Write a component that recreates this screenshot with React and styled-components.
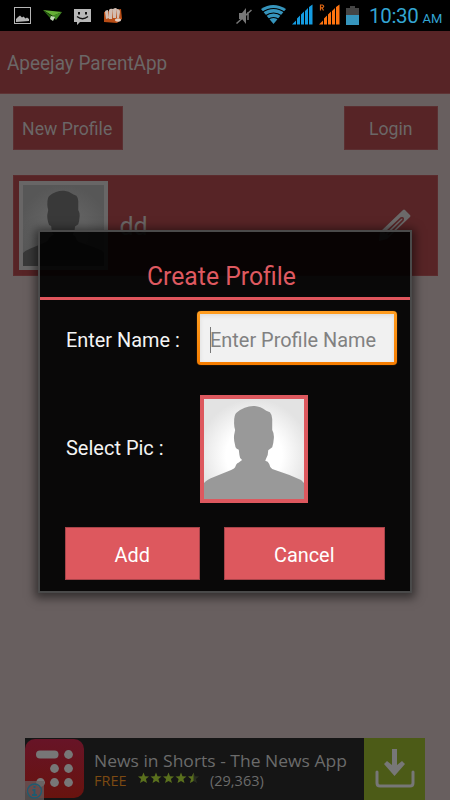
import React from "react";
import styled, { createGlobalStyle } from "styled-components";

const GlobalStyle = createGlobalStyle`
  * {
    box-sizing: border-box;
  }
  body {
    margin: 0;
    background-color: #685f5f;
    font-family: Roboto, "Liberation Sans", sans-serif;
  }
`;

const Screen = styled.div`
  position: relative;
  display: flex;
  flex-direction: column;
  width: 450px;
  height: 800px;
  overflow: hidden;
  background-color: #685f5f;
`;

const StatusBar = styled.div`
  display: flex;
  justify-content: space-between;
  height: 31px;
  background-color: #000;
`;

const StatusIcons = styled.svg`
  display: block;
  height: 31px;
`;

const StatusRight = styled.div`
  display: flex;
`;

const Clock = styled.div`
  width: 84px;
  padding-left: 3px;
  font-size: 20.5px;
  line-height: 33px;
  letter-spacing: -0.3px;
  white-space: nowrap;
  color: #33a5d3;
  small {
    margin-left: 4px;
    font-size: 13px;
    letter-spacing: 0;
  }
`;

const Label = styled.span`
  display: inline-block;
  white-space: nowrap;
  transform: scaleX(${(props) => props.$stretch || 1});
  transform-origin: ${(props) => props.$origin || "left"} center;
`;

const AppBar = styled.header`
  height: 63px;
  padding-left: 7px;
  font-size: 19.5px;
  line-height: 65px;
  color: #6b6767;
  background-color: #572426;
  border-bottom: 1px solid #5f3435;
`;

const Actions = styled.div`
  display: flex;
  justify-content: space-between;
  padding: 12px 12.5px 25px;
`;

const ActionBtn = styled.button`
  width: ${(props) => props.$width}px;
  height: 44px;
  padding: 2px 0 0;
  border: 1px solid #5b2f31;
  background-color: #572426;
  font-family: inherit;
  font-size: 18.5px;
  color: #6b6767;
`;

const ProfileCard = styled.div`
  display: flex;
  height: 101px;
  margin: 0 12.5px;
  padding: 5px;
  background-color: #572426;
  border: 1px solid #5b2b2d;
`;

const Photo = styled.div`
  width: ${(props) => props.$size}px;
  height: ${(props) => props.$size}px;
  padding: 4px;
  background-color: ${(props) => props.$frame};
  svg {
    display: block;
    width: 100%;
    height: 100%;
  }
`;

const ProfileName = styled.div`
  flex: 1;
  padding: 32px 0 0 12px;
  font-size: 25px;
  line-height: 28px;
  color: #6b6767;
`;

const EditIcon = styled.svg`
  width: 34px;
  height: 34px;
  margin: 28px 21px 0 0;
`;

const AdBanner = styled.div`
  display: flex;
  width: 400px;
  height: 62px;
  margin: auto auto 0;
  background-color: #151515;
`;

const AdText = styled.div`
  flex: 1;
  padding: 9px 0 0 10px;
  font-family: "Open Sans", sans-serif;
  color: #6b6b6b;
`;

const AdTitle = styled.div`
  height: 24px;
  font-size: 17.2px;
  line-height: 27px;
`;

const AdMeta = styled.div`
  display: flex;
  height: 20px;
  font-size: 14.5px;
  line-height: 20px;
`;

const Free = styled.span`
  width: 44px;
  color: #7c4a12;
`;

const Stars = styled.svg`
  width: 62px;
  height: 16px;
  margin-right: 10px;
`;

const Dialog = styled.div`
  position: absolute;
  left: 38px;
  top: 230px;
  width: 374px;
  height: 363px;
  border: 2px solid #4a4a4a;
  background-color: rgba(0, 0, 0, 0.91);
  box-shadow: 0 2px 9px 3px rgba(0, 0, 0, 0.5);
`;

const DialogTitle = styled.div`
  height: 68px;
  padding-top: 19px;
  border-bottom: 3px solid #e0555c;
  padding-left: 107px;
  font-size: 25.5px;
  line-height: 50px;
  color: #de5960;
`;

const Field = styled.div`
  display: flex;
  align-items: center;
  height: ${(props) => props.$height}px;
  margin-top: ${(props) => props.$top}px;
  padding-left: 26px;
`;

const FieldLabel = styled.div`
  width: ${(props) => props.$width}px;
  margin-top: ${(props) => props.$shift || 0}px;
  font-size: 20.5px;
  color: #f4f4f4;
`;

const NameInput = styled.div`
  display: flex;
  align-items: center;
  width: 200px;
  height: 54px;
  padding: 3px;
  border-radius: 4px;
  background: linear-gradient(#ff9d20, #f57c00);
  box-shadow: 0 0 1px #b56a14;
`;

const InputInner = styled.div`
  display: flex;
  align-items: center;
  width: 100%;
  height: 100%;
  padding: 4px 0 0 10px;
  background-color: #f1f1f1;
  box-shadow: inset 0 2px 4px #dcdcdc;
  font-size: 20.5px;
  color: #818181;
`;

const Caret = styled.div`
  width: 1px;
  height: 26px;
  margin-right: -1px;
  background-color: #777;
`;

const DialogButtons = styled.div`
  display: flex;
  gap: 24px;
  margin: 24px 0 0 25px;
`;

const DialogBtn = styled.button`
  width: ${(props) => props.$width}px;
  height: 53px;
  padding: 2px 0 0;
  border: 1px solid #a84349;
  background-color: #dd585e;
  font-family: inherit;
  font-size: 20.5px;
  color: #fff;
`;

function Silhouette({ id, fill, glow, edge }) {
  return (
    <svg viewBox="0 0 302 300" preserveAspectRatio="none">
      <defs>
        <radialGradient id={id} cx="50%" cy="56%" r="56%">
          <stop offset="0.5" stopColor={glow} />
          <stop offset="1" stopColor={edge} />
        </radialGradient>
      </defs>
      <rect width="302" height="300" fill={`url(#${id})`} />
      <path
        d="M0 300V252Q8 243 28 235L82 213Q93 209 94 205Q97 193 104 191L115 183Q107 178 107 168L105 152Q95 150 94 139Q89 120 91 108L94 93Q90 80 91 68Q91 47 98 41Q107 32 123 26Q138 20 153 21Q170 22 188 35L199 40Q206 48 206 60V93Q212 103 211 117Q210 133 206 145L194 154Q194 168 188 178L185 185Q194 186 197 195Q199 206 206 210L258 228L293 243L302 252V300Z"
        fill={fill}
      />
    </svg>
  );
}

function NotificationIcons() {
  return (
    <StatusIcons width="130" viewBox="0 0 130 31">
      <rect x="14.5" y="7.5" width="16" height="16" fill="none" stroke="#b5b5b5" />
      <path d="M16 22v-3l2-2 2-1.500 2 2 1.500-1 2 2 1.500-1 2 1.500v2z" fill="#b5b5b5" />
      <path d="M43 10l19 2-9 4z" fill="#65af35" />
      <path d="M62 12l-6 8-4-4z" fill="#438b24" />
      <path d="M43 10l9 6-1 3z" fill="#2b6914" />
      <path d="M51 16l4 1-2 4-3-2z" fill="#c2d9b6" />
      <path d="M74 9h17v13H80l-3 3v-3h-3z" fill="#b8b8b8" />
      <path d="M78 12h2v2.500h-2zm7 0h2v2.500h-2z" fill="#111" />
      <path d="M77 16.500q5.500 4.500 11 0" fill="none" stroke="#111" strokeWidth="1.400" />
      <path d="M104 12l17-3 1 10-5 4-13-1z" fill="#b84d16" />
      <path
        d="M105 12q0-2 3-2l1 8-3 1zM109 10q1-2 4-1l-1 10h-3zM113 9q3-2 4 0l-1 9h-3zM117 9q3 0 3 3l-1 6h-2z"
        fill="#d2bdb2"
      />
      <ellipse cx="118" cy="20" rx="3" ry="1.7" fill="#e3cec1" />
    </StatusIcons>
  );
}

function SystemIcons() {
  return (
    <StatusIcons width="132" viewBox="235 0 132 31">
      <path d="M240 13h3l4-5v16l-4-5h-3z" fill="#777" />
      <path d="M249 12v8M237.500 23.500l15-13.500" fill="none" stroke="#777" strokeWidth="1.5" />
      <path d="M262 9q12-8 25 0l-12.5 15z" fill="#3695bd" />
      <path
        d="M263 12.5q11.5-8 23 0M266 16q8.500-6 17 0M269 19.500q5.500-4 11 0"
        fill="none"
        stroke="#000"
        strokeWidth="1.2"
      />
      <path d="M293 24.500l4-4v4zM298 24.500v-6l3-3v9zM302 24.500v-10l3-3v13zM306 24.500V11l3-3v16.500zM310 24.500V7l3.500-2.500v20z" fill="#149be0" />
      <path d="M320 24.500l4-4v4zM325 24.500v-6l3-3v9zM329 24.500v-10l3-3v13zM333 24.500V11l3-3v16.500zM337 24.500V7l3.500-2.500v20z" fill="#ff7410" />
      <path d="M321.500 10.500V5h2q2.500 1.300 0 2.800h-2m1.500 0l1.500 2.700" fill="none" stroke="#de6613" strokeWidth="1.2" />
      <path d="M347 8h4V6h5v2h4v17h-13z" fill="#454545" />
      <rect x="347" y="15" width="13" height="10" fill="#3695bd" />
    </StatusIcons>
  );
}

function AdIcon() {
  return (
    <svg width="59" height="62" viewBox="0 0 59 62">
      <defs>
        <linearGradient id="adRed" x1="0" y1="0" x2="0" y2="1">
          <stop offset="0" stopColor="#671427" />
          <stop offset="1" stopColor="#68130e" />
        </linearGradient>
      </defs>
      <rect x="0" y="1" width="59" height="59" rx="10" fill="url(#adRed)" />
      <g fill="#777">
        <rect x="11" y="12.500" width="22.500" height="8" rx="4" />
        <circle cx="43.500" cy="16.500" r="4.400" />
        <circle cx="29.500" cy="30.500" r="4.400" />
        <circle cx="43.500" cy="30.500" r="4.400" />
        <circle cx="15.500" cy="44.500" r="4.400" />
        <circle cx="29.500" cy="44.500" r="4.400" />
        <circle cx="43.500" cy="44.500" r="4.400" />
      </g>
      <rect x="0" y="43" width="19" height="19" fill="#665d5d" fillOpacity="0.75" />
      <circle cx="9.500" cy="53" r="7" fill="none" stroke="#1f5b70" strokeWidth="1.400" />
      <path d="M7.500 52h2v5M7 57h5M8.500 49h2" fill="none" stroke="#1f5b70" strokeWidth="1.800" />
    </svg>
  );
}

const STAR = "M5.500 0l1.500 3.800 4 .2-3.100 2.600 1.100 4-3.500-2.200L2 10.600l1.100-4L0 4l4-.2z";

function Rating() {
  return (
    <Stars viewBox="0 0 62 16">
      {[0, 1, 2, 3, 4].map((n) => (
        <path key={n} d={STAR} transform={`translate(${n * 12.5} 1.500)`} fill={n === 4 ? "#292e20" : "#5a701d"} />
      ))}
      <path d="M5.500 0v8.400L2 10.600l1.100-4L0 4l4-.2z" transform="translate(50 1.500)" fill="#5a701d" />
    </Stars>
  );
}

export default function App() {
  return (
    <Screen>
      <GlobalStyle />
      <StatusBar>
        <NotificationIcons />
        <StatusRight>
          <SystemIcons />
          <Clock>
            10:30<small>AM</small>
          </Clock>
        </StatusRight>
      </StatusBar>
      <AppBar>
        <Label $stretch={0.972}>Apeejay ParentApp</Label>
      </AppBar>
      <Actions>
        <ActionBtn $width={110}>
          <Label $stretch={0.955} $origin="center">New Profile</Label>
        </ActionBtn>
        <ActionBtn $width={93.5}>
          <Label $stretch={0.955} $origin="center">Login</Label>
        </ActionBtn>
      </Actions>
      <ProfileCard>
        <Photo $size={89} $frame="#686666">
          <Silhouette id="cardGlow" fill="#393939" glow="#616161" edge="#575757" />
        </Photo>
        <ProfileName>dd</ProfileName>
        <EditIcon viewBox="0 0 34 34">
          <path d="M3 23L26 1q1-1 2 0l5 5q1 1 0 2L10 30l-8 2z" fill="#6b6969" />
          <path d="M8 24L24 9q3-1 2 2L11 26" fill="none" stroke="#572426" strokeWidth="1.600" />
        </EditIcon>
      </ProfileCard>
      <AdBanner>
        <AdIcon />
        <AdText>
          <AdTitle>
            <Label $stretch={1.017}>News in Shorts - The News App</Label>
          </AdTitle>
          <AdMeta>
            <Free>FREE</Free>
            <Rating />
            <Label>(29,363)</Label>
          </AdMeta>
        </AdText>
        <svg width="61" height="62" viewBox="0 0 61 62">
          <rect width="61" height="62" fill="#4c5b17" />
          <path d="M13 34v11q0 3 3 3h30q3 0 3-3V34" fill="none" stroke="#777" strokeWidth="3" strokeLinecap="round" />
          <path d="M28 11h5v16l5-4 3 3-10.500 12L20 26l3-3 5 4z" fill="#777" />
        </svg>
      </AdBanner>
      <Dialog>
        <DialogTitle>
          <Label $stretch={0.97}>Create Profile</Label>
        </DialogTitle>
        <Field $height={54} $top={11}>
          <FieldLabel $width={131} $shift={3}>
            <Label $stretch={0.97}>Enter Name :</Label>
          </FieldLabel>
          <NameInput>
            <InputInner>
              <Caret />
              <Label $stretch={0.972}>Enter Profile Name</Label>
            </InputInner>
          </NameInput>
        </Field>
        <Field $height={108} $top={30}>
          <FieldLabel $width={134} $shift={-3}>
            <Label $stretch={0.975}>Select Pic :</Label>
          </FieldLabel>
          <Photo $size={108} $frame="#dd585e">
            <Silhouette id="dialogGlow" fill="#999" glow="#fff" edge="#e3e3e3" />
          </Photo>
        </Field>
        <DialogButtons>
          <DialogBtn $width={135}>
            <Label $stretch={0.97} $origin="center">Add</Label>
          </DialogBtn>
          <DialogBtn $width={161}>
            <Label $stretch={0.97} $origin="center">Cancel</Label>
          </DialogBtn>
        </DialogButtons>
      </Dialog>
    </Screen>
  );
}
